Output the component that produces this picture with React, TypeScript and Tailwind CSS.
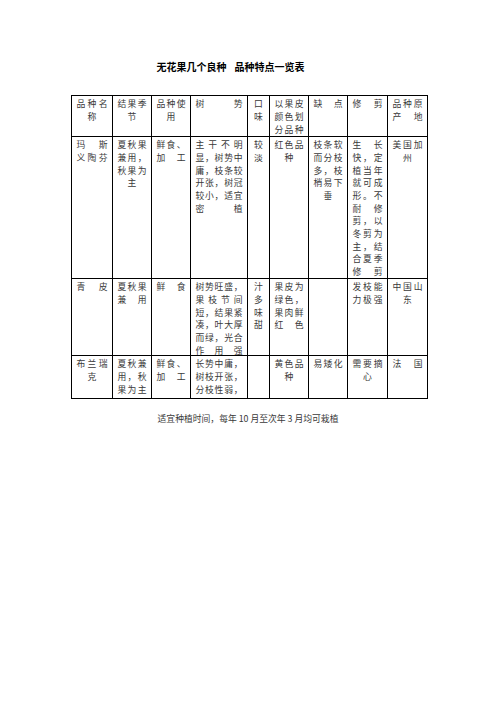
import React from "react";

type Cell = string[];

const header: Cell[] = [
  ["品种名", "称"],
  ["结果季", "节"],
  ["品种使", "用"],
  ["树势"],
  ["口", "味"],
  ["以果皮", "颜色划", "分品种"],
  ["缺点"],
  ["修剪"],
  ["品种原", "产地"],
];

const row1: Cell[] = [
  ["玛斯", "义陶芬"],
  ["夏秋果", "兼用，", "秋果为", "主"],
  ["鲜食、", "加工"],
  ["主干不明", "显，树势中", "庸，枝条较", "开张，树冠", "较小，适宜", "密植"],
  ["较", "淡"],
  ["红色品", "种"],
  ["枝条软", "而分枝", "多，枝", "梢易下", "垂"],
  ["生长", "快，定", "植当年", "就可成", "形。不", "耐修", "剪，以", "冬剪为", "主，结", "合夏季", "修剪"],
  ["美国加", "州"],
];

const row2: Cell[] = [
  ["青皮"],
  ["夏秋果", "兼用"],
  ["鲜食"],
  ["树势旺盛，", "果枝节间", "短，结果紧", "凑，叶大厚", "而绿，光合", "作用强"],
  ["汁", "多", "味", "甜"],
  ["果皮为", "绿色，", "果肉鲜", "红色"],
  [],
  ["发枝能", "力极强"],
  ["中国山", "东"],
];

const row3: Cell[] = [
  ["布兰瑞", "克"],
  ["夏秋兼", "用，秋", "果为主"],
  ["鲜食、", "加工"],
  ["长势中庸，", "树枝开张，", "分枝性弱，"],
  [],
  ["黄色品", "种"],
  ["易矮化"],
  ["需要摘", "心"],
  ["法国"],
];

const rows = [header, row1, row2, row3];

function Line({ text }: { text: string }) {
  const chars = Array.from(text);
  return (
    <div
      className={
        "flex h-[12.7px] items-center " +
        (chars.length === 1 ? "justify-center" : "justify-between")
      }
    >
      {chars.map((c, i) => (
        <span key={i}>{c}</span>
      ))}
    </div>
  );
}

export default function App() {
  return (
    <div
      className="min-h-[702px] w-[496px] bg-white text-black"
      style={{ fontFamily: '"Noto Sans CJK SC", "Noto Sans", sans-serif' }}
    >
      <div className="pt-[60px] pr-[35px] text-center text-[10px] font-bold leading-[14px]">
        无花果几个良种<span className="ml-[8px]">品种特点一览表</span>
      </div>
      <div className="mt-[21px] ml-[71px] grid w-fit grid-cols-[41px_39px_39px_57px_22px_39px_39px_40px_40px] grid-rows-[41px_142px_77px_43px] border-l border-t border-black text-[8.8px] text-[#3a3a3a]">
        {rows.map((r, ri) =>
          r.map((cell, ci) => (
            <div
              key={ri + "-" + ci}
              className="border-r border-b border-black px-[4.5px] pt-[1.5px]"
            >
              {cell.map((l, li) => (
                <Line key={li} text={l} />
              ))}
            </div>
          ))
        )}
      </div>
      <div className="mt-[13px] text-center text-[8.8px] leading-[13px] text-[#3a3a3a]">
        适宜种植时间，每年 10 月至次年 3 月均可栽植
      </div>
    </div>
  );
}
